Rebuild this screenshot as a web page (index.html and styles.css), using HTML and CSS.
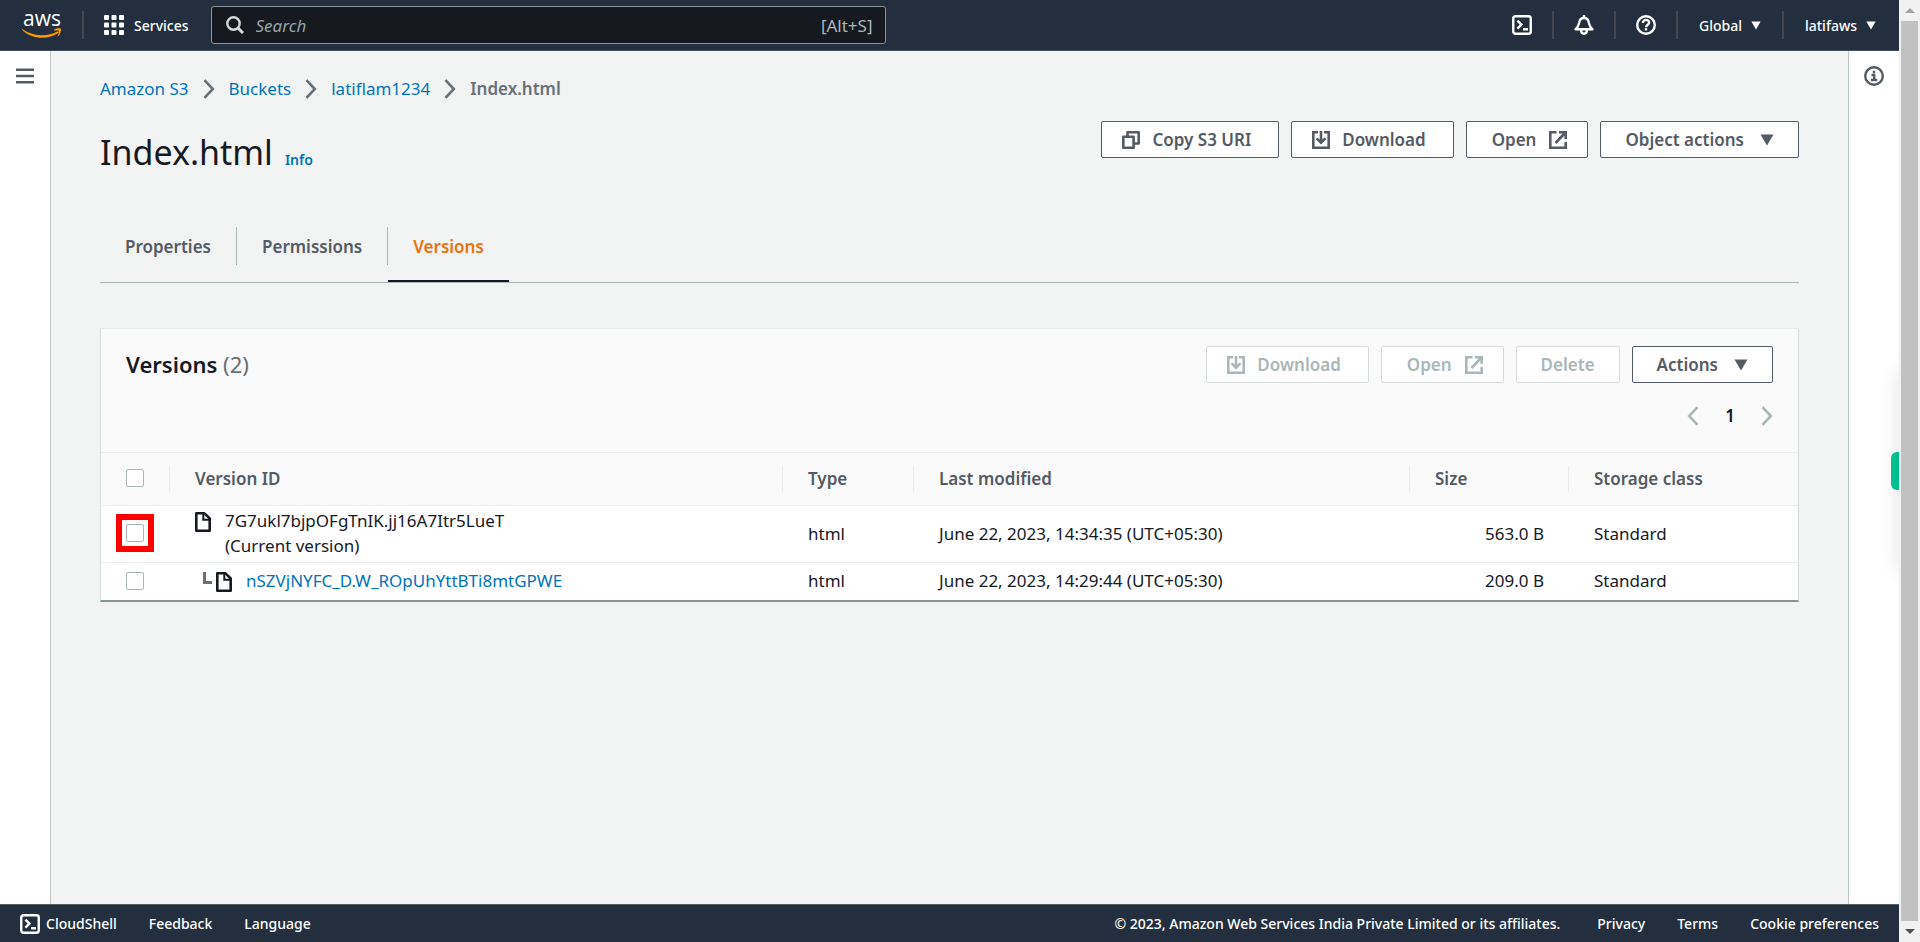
FILE: index.html
```html
<!DOCTYPE html>
<html lang="en">
<head>
<meta charset="utf-8">
<title>Index.html - S3 bucket</title>
<meta name="viewport" content="width=device-width, initial-scale=1">
<link rel="stylesheet" href="styles.css">
</head>
<body>
<svg class="defs" aria-hidden="true">
  <symbol id="shell" viewBox="0 0 20 20"><rect x="1.25" y="1.25" width="17.5" height="17.5" rx="2.2" fill="none" stroke="currentColor" stroke-width="2.4"/><path d="M5.4 5.600l4 4-4 4M11 14.200h5" fill="none" stroke="currentColor" stroke-width="2.4"/></symbol>
  <symbol id="download" viewBox="0 0 18 18"><path d="M6 1.300H1.300v15.400h15.400V1.300H12M9 0v11M4.600 7.300L9 11.700l4.400-4.400" fill="none" stroke="currentColor" stroke-width="2.600"/></symbol>
  <symbol id="external" viewBox="0 0 18 18"><path d="M7.500 1.300H1.300v15.400h15.400V11M10 1.300h6.700V8M16.500 1.500L6.500 12" fill="none" stroke="currentColor" stroke-width="2.600"/></symbol>
  <symbol id="copy" viewBox="0 0 18 18"><path d="M1.300 5.700h10.300v11H1.300zM5.500 5.500V1.300h11.200v11.200H12" fill="none" stroke="currentColor" stroke-width="2.600" stroke-linejoin="round"/></symbol>
  <symbol id="caret" viewBox="0 0 14 12"><path d="M.5.500h13L7 11.500z" fill="currentColor"/></symbol>
  <symbol id="next" viewBox="0 0 12 20"><path d="M1.500 1.200L9.800 10l-8.300 8.800" fill="none" stroke="currentColor" stroke-width="2.6"/></symbol>
  <symbol id="prev" viewBox="0 0 12 20"><path d="M10.500 1.200L2.200 10l8.300 8.800" fill="none" stroke="currentColor" stroke-width="2.6"/></symbol>
  <symbol id="file" viewBox="0 0 16 20"><path d="M1.300 1.300h8.200l5.200 5.200v12.200H1.300z" fill="none" stroke="currentColor" stroke-width="2.600" stroke-linejoin="round"/><path d="M8.300 1.500v6.200h6.200" fill="none" stroke="currentColor" stroke-width="2"/></symbol>
</svg>
<div class="app">
  <header class="topbar">
    <a class="logo" href="#" aria-label="AWS home"><span class="logo-text">aws</span>
      <svg class="logo-smile" viewBox="0 0 40 11"><path d="M.6 1.200C11 8.600 25 9.200 35.300 3.600c1.200-.6 2.100.7 1 1.500C26 12.200 9.500 11.300.200 2c-.5-.6-.1-1.100.4-.8z" fill="#f90"/><path d="M32.200 1.500C34.300.100 38.200-.100 38.800.700c.6.900-.3 5.500-2.500 7.300-.4.300-.8.100-.5-.4.700-1.600 1.600-4.200 1.100-4.800-.5-.6-3-.4-4.400-.3-.6.100-.7-.6-.3-1z" fill="#f90"/></svg>
    </a>
    <button class="nav services" type="button">
      <svg class="i20" viewBox="0 0 20 20" fill="currentColor"><rect width="5" height="5" rx="1"/><rect x="7.500" width="5" height="5" rx="1"/><rect x="15" width="5" height="5" rx="1"/><rect y="7.500" width="5" height="5" rx="1"/><rect x="7.500" y="7.500" width="5" height="5" rx="1"/><rect x="15" y="7.500" width="5" height="5" rx="1"/><rect y="15" width="5" height="5" rx="1"/><rect x="7.500" y="15" width="5" height="5" rx="1"/><rect x="15" y="15" width="5" height="5" rx="1"/></svg>
      Services</button>
    <label class="search">
      <svg class="i18" viewBox="0 0 18 18" fill="none" stroke="#d5dbdb" stroke-width="2.400"><circle cx="7.500" cy="7.500" r="6.200"/><path d="M12 12l5 5" stroke-width="3"/></svg>
      <input type="search" placeholder="Search" aria-label="Search">
      <span class="shortcut">[Alt+S]</span>
    </label>
    <nav class="tools" aria-label="Account">
      <button class="nav tool icon-only" type="button" aria-label="CloudShell"><svg class="i20"><use href="#shell"/></svg></button>
      <button class="nav tool icon-only" type="button" aria-label="Notifications"><svg class="i20" viewBox="0 0 20 20" fill="none" stroke="currentColor" stroke-width="2.400" stroke-linejoin="round"><path d="M1.500 14.300h17c-3-2.500-3.300-4.300-3.800-7C14.300 4.700 12.600 3 10 3S5.700 4.700 5.300 7.300c-.5 2.700-.8 4.500-3.800 7z"/><path d="M10 0v3M7 15c.2 5 5.800 5 6 0"/></svg></button>
      <button class="nav tool icon-only" type="button" aria-label="Help"><svg class="i20" viewBox="0 0 20 20" fill="none" stroke="currentColor" stroke-width="2.400"><circle cx="10" cy="10" r="8.800"/><path d="M6.900 8c0-4.300 6.300-3.900 6.200-.3 0 2-3.100 2.100-3.100 4.500M10 13.300v2.300"/></svg></button>
      <button class="nav tool" type="button">Global <svg class="caret-sm"><use href="#caret"/></svg></button>
      <button class="nav tool" type="button">latifaws <svg class="caret-sm"><use href="#caret"/></svg></button>
    </nav>
  </header>

  <div class="shell">
    <aside class="rail rail-left"><button class="rail-btn" type="button" aria-label="Open navigation"><svg class="i20" viewBox="0 0 20 20" stroke="currentColor" stroke-width="2.600"><path d="M1 3.700h18M1 10h18M1 16.300h18"/></svg></button></aside>
    <main class="main">
      <nav class="crumbs" aria-label="Breadcrumb">
        <a href="#">Amazon S3</a><svg class="chev"><use href="#next"/></svg>
        <a href="#">Buckets</a><svg class="chev"><use href="#next"/></svg>
        <a href="#">latiflam1234</a><svg class="chev"><use href="#next"/></svg>
        <span class="here">Index.html</span>
      </nav>
      <div class="title-row">
        <h1 class="title">Index.html</h1><a class="info" href="#">Info</a>
        <div class="actions">
          <button class="btn lead" type="button"><svg class="i18"><use href="#copy"/></svg>Copy S3 URI</button>
          <button class="btn lead" type="button"><svg class="i18"><use href="#download"/></svg>Download</button>
          <button class="btn trail" type="button">Open<svg class="i18"><use href="#external"/></svg></button>
          <button class="btn" type="button">Object actions<svg class="caret"><use href="#caret"/></svg></button>
        </div>
      </div>
      <div class="tabs" role="tablist">
        <button class="tab" role="tab" type="button">Properties</button>
        <button class="tab" role="tab" type="button">Permissions</button>
        <button class="tab active" role="tab" type="button" aria-selected="true">Versions</button>
      </div>
      <section class="card">
        <div class="card-head">
          <h2 class="card-title">Versions <span class="count">(2)</span></h2>
          <div class="card-tools">
            <div class="actions">
              <button class="btn lead" type="button" disabled><svg class="i18"><use href="#download"/></svg>Download</button>
              <button class="btn trail" type="button" disabled>Open<svg class="i18"><use href="#external"/></svg></button>
              <button class="btn" type="button" disabled>Delete</button>
              <button class="btn" type="button">Actions<svg class="caret"><use href="#caret"/></svg></button>
            </div>
            <div class="pager">
              <button class="page-btn" type="button" aria-label="Previous page"><svg class="chev"><use href="#prev"/></svg></button>
              <button class="page-btn page-num" type="button">1</button>
              <button class="page-btn" type="button" aria-label="Next page"><svg class="chev"><use href="#next"/></svg></button>
            </div>
          </div>
        </div>
        <table class="grid">
          <colgroup><col class="c-check"><col><col class="c-type"><col class="c-date"><col class="c-size"><col class="c-class"></colgroup>
          <thead>
            <tr><th><input class="check" type="checkbox" aria-label="Select all versions"></th><th>Version ID</th><th>Type</th><th>Last modified</th><th>Size</th><th>Storage class</th></tr>
          </thead>
          <tbody>
            <tr><td><span class="marked"><input class="check" type="checkbox" aria-label="Select current version"></span></td>
              <td><div class="version"><svg class="file"><use href="#file"/></svg><span>7G7ukl7bjpOFgTnIK.jj16A7Itr5LueT<br>(Current version)</span></div></td>
              <td>html</td><td>June 22, 2023, 14:34:35 (UTC+05:30)</td><td class="num">563.0 B</td><td>Standard</td></tr>
            <tr><td><input class="check" type="checkbox" aria-label="Select previous version"></td>
              <td><div class="version child"><span class="elbow"></span><svg class="file"><use href="#file"/></svg><a href="#">nSZVjNYFC_D.W_ROpUhYttBTi8mtGPWE</a></div></td>
              <td>html</td><td>June 22, 2023, 14:29:44 (UTC+05:30)</td><td class="num">209.0 B</td><td>Standard</td></tr>
          </tbody>
        </table>
      </section>
    </main>
    <aside class="rail rail-right"><button class="rail-btn" type="button" aria-label="Open info panel"><svg class="i20" viewBox="0 0 20 20" fill="none" stroke="currentColor" stroke-width="2.400"><circle cx="10" cy="10" r="8.800"/><path d="M7.500 9h2.700v5M7 14h6.200M10 4.800v2.500"/></svg></button></aside>
    <span class="side-tab"></span>
  </div>

  <footer class="footer">
    <a href="#" class="cloudshell"><svg class="i20"><use href="#shell"/></svg>CloudShell</a>
    <a href="#">Feedback</a>
    <a href="#">Language</a>
    <span class="legal">© 2023, Amazon Web Services India Private Limited or its affiliates.</span>
    <a href="#">Privacy</a>
    <a href="#">Terms</a>
    <a href="#">Cookie preferences</a>
  </footer>
</div>
<div class="scrollbar" aria-hidden="true"><span class="arrow up"></span><span class="thumb"></span><span class="arrow down"></span></div>
</body>
</html>
```
FILE: styles.css
```css
* { box-sizing: border-box; }
body {
  margin: 0;
  display: flex;
  min-height: 100vh;
  font: 17px/25px "Noto Sans", "Open Sans", sans-serif;
  color: #16191f;
  background: #f2f3f3;
}
button, input { font: inherit; color: inherit; }
button { background: none; border: 0; padding: 0; margin: 0; }
a { color: #0073bb; text-decoration: none; }
h1, h2 { margin: 0; }
svg { display: block; flex: none; }
.defs { position: absolute; width: 0; height: 0; }
.i20 { width: 20px; height: 20px; }
.i18 { width: 18px; height: 18px; }
.app { flex: 1; min-width: 0; display: flex; flex-direction: column; }

/* Top bar */
.topbar {
  display: flex;
  align-items: center;
  height: 51px;
  background: #232f3e;
  border-bottom: 1px solid #414d5c;
  color: #fff;
  font-size: 14px;
}
.logo {
  width: 84px;
  height: 28px;
  padding-left: 22px;
  border-right: 2px solid #424750;
  color: #fff;
}
.logo-text { display: block; width: 40px; height: 17px; font: 500 21px/14px "Open Sans", sans-serif; text-align: center; }
.logo-smile { width: 40px; height: 11px; }
.nav { display: flex; align-items: center; font-weight: 500; }
.services { gap: 10px; padding: 0 22px 0 20px; }
.search {
  display: flex;
  align-items: center;
  gap: 12px;
  flex: 0 1 675px;
  height: 38px;
  padding: 0 12px 0 14px;
  background: #161920;
  border: 1px solid #879596;
  border-radius: 3px;
}
.search input {
  flex: 1;
  min-width: 0;
  border: 0;
  padding: 0;
  background: none;
  outline: none;
  font-size: 17px;
}
.search input::placeholder { color: #95a5a6; font-style: italic; opacity: 1; }
.shortcut { font-size: 17px; color: #aab7b8; }
.tools { display: flex; margin-left: auto; padding-right: 2px; }
.tool { gap: 9px; height: 28px; padding: 0 21px; }
.icon-only { padding: 0 20px; }
.tool + .tool { border-left: 2px solid #424750; }
.caret-sm { width: 10px; height: 9px; }

/* Frame */
.shell { position: relative; flex: 1; display: flex; overflow: hidden; }
.rail { flex: none; width: 51px; background: #fff; padding-top: 15px; color: #545b64; }
.rail-left { border-right: 1px solid #bcc4c4; }
.rail-right { border-left: 1px solid #bcc4c4; }
.rail-btn { display: block; margin: 0 auto; }
.side-tab {
  position: absolute;
  right: 0;
  top: 401px;
  width: 8px;
  height: 38px;
  background: #00c896;
  border-radius: 6px 0 0 6px;
}
.side-tab::before {
  content: "";
  position: absolute;
  left: 8px;
  top: -80px;
  bottom: -80px;
  width: 40px;
  box-shadow: 0 0 20px rgba(0, 0, 0, .12);
}
.main { flex: 1; min-width: 0; padding: 25px 49px; }

/* Heading */
.crumbs { display: flex; align-items: center; gap: 14px; color: #687078; }
.crumbs .here { font-weight: 600; }
.chev { width: 12px; height: 20px; }
.title-row { display: flex; align-items: baseline; gap: 12px; margin-top: 20px; }
.title { font-size: 34px; line-height: 62px; font-weight: 400; }
.info { font-size: 14px; font-weight: 600; }
.actions { display: flex; gap: 12px; }
.title-row .actions { margin-left: auto; align-self: flex-start; }
.btn {
  display: flex;
  align-items: center;
  gap: 16px;
  height: 37px;
  padding: 0 24px;
  background: #fff;
  border: 1px solid #545b64;
  border-radius: 2px;
  color: #545b64;
  font-weight: 600;
  white-space: nowrap;
}
.btn:disabled { border-color: #d5dbdb; color: #aab7b8; }
.lead { padding: 0 27px 0 20px; gap: 12px; }
.trail { padding: 0 20px 0 25px; gap: 13px; }
.caret { width: 14px; height: 12px; }

/* Tabs */
.tabs { display: flex; align-items: flex-start; margin-top: 44px; border-bottom: 1px solid #aab7b8; }
.tab {
  position: relative;
  height: 38px;
  margin-bottom: 17px;
  padding: 0 25px;
  color: #545b64;
  font-weight: 600;
}
.tab + .tab { border-left: 1px solid #aab7b8; }
.tab.active { color: #ec7211; }
.tab.active::after {
  content: "";
  position: absolute;
  left: 0;
  right: 0;
  bottom: -17px;
  height: 2px;
  background: #16191f;
}

/* Card */
.card {
  margin-top: 45px;
  background: #fff;
  border: 1px solid #d5dbdb;
  border-top-color: #eaeded;
  border-bottom: 2px solid #879596;
}
.card-head { display: flex; justify-content: space-between; padding: 17px 25px 24px; background: #fafafa; }
.card-title { font-size: 22px; line-height: 37px; font-weight: 600; }
.count { font-weight: 400; color: #687078; }
.pager { display: flex; align-items: center; justify-content: flex-end; gap: 26px; margin-top: 20px; color: #aab7b8; }
.page-num { color: #16191f; font-weight: 600; }
.grid { width: 100%; table-layout: fixed; border-collapse: collapse; }
.c-check { width: 69px; }
.c-type { width: 131px; }
.c-date { width: 496px; }
.c-size { width: 159px; }
.c-class { width: 229px; }
.grid th, .grid td { border-top: 1px solid #eaeded; padding: 0 25px; text-align: left; vertical-align: middle; }
.grid th {
  height: 53px;
  color: #545b64;
  font-weight: 600;
  background: linear-gradient(#eaeded, #eaeded) right center / 1px 26px no-repeat #fafafa;
}
.grid th:last-child { background: #fafafa; }
.grid td { padding-top: 2px; padding-bottom: 4px; }
.grid tr:last-child td { padding-top: 5px; padding-bottom: 7px; }
.grid tr th { padding-bottom: 2px; }
.grid th:first-child, .grid td:first-child { padding-left: 25px; padding-right: 0; }
.grid .num { text-align: right; }
.check {
  display: block;
  appearance: none;
  width: 18px;
  height: 18px;
  margin: 0;
  background: #fff;
  border: 1px solid #aab7b8;
  border-radius: 2px;
}
.marked { position: relative; display: block; width: 18px; }
.marked::after {
  content: "";
  position: absolute;
  inset: -10px;
  border: 6px solid #f00;
}
.version { display: flex; align-items: flex-start; gap: 14px; }
.file { width: 16px; height: 20px; margin-top: 4px; }
.child { padding-left: 8px; }
.elbow { width: 9px; height: 12px; margin: 4px -10px 0 0; border: solid #687078; border-width: 0 0 3px 3px; }

/* Footer */
.footer {
  display: flex;
  align-items: center;
  gap: 32px;
  height: 38px;
  padding: 0 20px;
  background: #232f3e;
  border-top: 1px solid #545b64;
  color: #fff;
  font-size: 14px;
  font-weight: 500;
}
.footer a { color: #fff; }
.cloudshell { display: flex; align-items: center; gap: 6px; }
.legal { margin-left: auto; margin-right: 5px; }

/* Scroll bar */
.scrollbar {
  flex: none;
  width: 21px;
  display: flex;
  flex-direction: column;
  align-items: center;
  background: #f1f1f1;
}
.thumb { flex: 1; width: 17px; background: #c1c1c1; }
.arrow { height: 21px; display: flex; align-items: center; }
.arrow::before { content: ""; border: 5px solid transparent; }
.up::before { border-top-width: 0; border-bottom-color: #a3a3a3; }
.down::before { border-bottom-width: 0; border-top-color: #505050; }
```
